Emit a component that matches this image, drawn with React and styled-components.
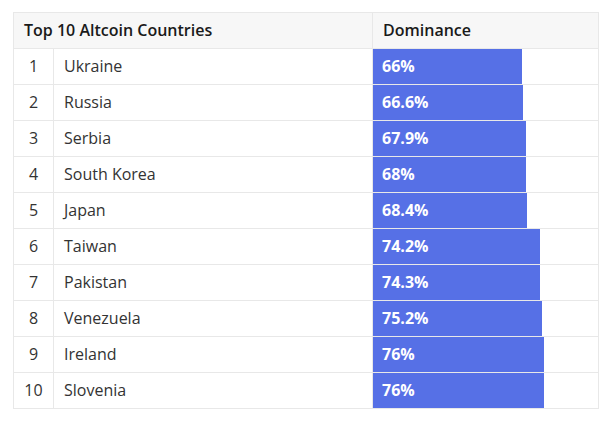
import React from 'react';
import styled, { createGlobalStyle } from 'styled-components';

const GlobalStyle = createGlobalStyle`
  body {
    margin: 0;
    background: #fff;
    font-family: "Open Sans", "Liberation Sans", sans-serif;
  }
`;

const Wrapper = styled.div`
  padding: 12px 9px 0 13px;
`;

const Table = styled.table`
  width: 585px;
  border-collapse: collapse;
  table-layout: fixed;
  border: 1px solid #e8e8e8;
  font-size: 16px;
  line-height: 20px;
  color: #333;
`;

const HeadCell = styled.th`
  height: 33px;
  padding: 0 10px 2px;
  background: #f7f7f7;
  border: 1px solid #e8e8e8;
  text-align: left;
  font-weight: 600;
  color: #1a1a1a;
`;

const Cell = styled.td`
  height: 33px;
  padding: 0 10px 2px;
  border: 1px solid #e8e8e8;
  text-align: ${(p) => (p.$center ? 'center' : 'left')};
`;

const BarCell = styled.td`
  height: 35px;
  padding: 0;
  border: 1px solid #e8e8e8;
`;

const Bar = styled.div`
  height: 35px;
  background: #5670e6;
  color: #fff;
  font-weight: 700;
  display: flex;
  align-items: center;
  padding: 0 0 2px 9px;
  box-sizing: border-box;
`;

const rows = [
  { country: 'Ukraine', value: 66, label: '66%' },
  { country: 'Russia', value: 66.6, label: '66.6%' },
  { country: 'Serbia', value: 67.9, label: '67.9%' },
  { country: 'South Korea', value: 68, label: '68%' },
  { country: 'Japan', value: 68.4, label: '68.4%' },
  { country: 'Taiwan', value: 74.2, label: '74.2%' },
  { country: 'Pakistan', value: 74.3, label: '74.3%' },
  { country: 'Venezuela', value: 75.2, label: '75.2%' },
  { country: 'Ireland', value: 76, label: '76%' },
  { country: 'Slovenia', value: 76, label: '76%' },
];

const App = () => (
  <Wrapper>
    <GlobalStyle />
    <Table>
      <colgroup>
        <col style={{ width: 40 }} />
        <col style={{ width: 319 }} />
        <col style={{ width: 226 }} />
      </colgroup>
      <thead>
        <tr>
          <HeadCell colSpan={2}>Top 10 Altcoin Countries</HeadCell>
          <HeadCell>Dominance</HeadCell>
        </tr>
      </thead>
      <tbody>
        {rows.map((row, i) => (
          <tr key={row.country}>
            <Cell $center>{i + 1}</Cell>
            <Cell>{row.country}</Cell>
            <BarCell>
              <Bar style={{ width: `${row.value}%` }}>{row.label}</Bar>
            </BarCell>
          </tr>
        ))}
      </tbody>
    </Table>
  </Wrapper>
);

export default App;
